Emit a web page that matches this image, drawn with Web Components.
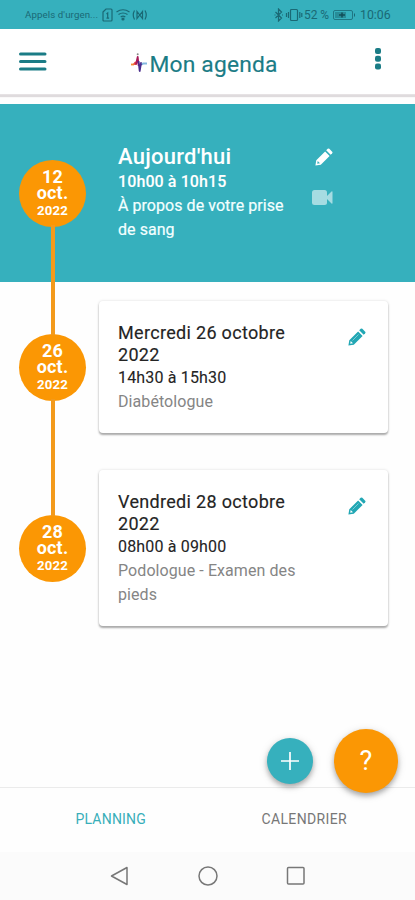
<!DOCTYPE html>
<html lang="fr"><head><meta charset="utf-8"><title>Mon agenda</title>
<style>html,body{margin:0;background:#fefefe;font-family:Roboto,"Liberation Sans",sans-serif;overflow:hidden}</style></head><body>
<agenda-app></agenda-app>
<script>
const define=(name,html)=>{
  const t=document.createElement('template');t.innerHTML=html;
  customElements.define(name,class extends HTMLElement{
    constructor(){super();this.attachShadow({mode:'open'}).append(t.content.cloneNode(true));}
  });
};
define('status-bar',`<style>
:host{display:flex;height:29px;box-sizing:border-box;padding:1px 23px 0 25px;background:#36b0bd;color:#1a6975;align-items:center;justify-content:space-between}
div{display:flex;align-items:center}svg{display:block;fill:none;stroke:currentColor}
.c{font-size:9.7px;letter-spacing:.1px;line-height:14px;width:76px;white-space:nowrap}
.p{font-size:12px;line-height:14px;width:28px;white-space:nowrap;letter-spacing:-.1px}.t{font-size:12.3px;line-height:14px;margin-left:4px;width:32px;white-space:nowrap}
</style><div><span class="c">Appels d'urgen...</span>
<svg width="46" height="14" viewBox="0 0 46 14" stroke-width="1.2"><path d="M2 4l3-3h5q1 0 1 1v10q0 1-1 1H3q-1 0-1-1zM5.500 6l1.200-1v5M5.500 10.200h2.600M15.500 4q6.500-4.500 13 0M17.500 6.500q4.500-3 9 0M19.700 9q2.300-1.600 4.600 0"/><circle cx="22" cy="11" r="1" fill="currentColor"/><path d="M33.500 2.500q-2.500 4.500 0 9M44 2.500q2.500 4.500 0 9M36 3.500v7l5.500-7v7zM36 3.500l5.500 7"/></svg></div>
<div><svg width="31" height="14" viewBox="0 0 31 14" stroke-width="1.2"><path d="M2.500 4l6 6-3 3V1l3 3-6 6M1.500 7h1M9 7h1"/><rect x="17.500" y="1.500" width="7" height="11" rx="1"/><path d="M15.500 4v6M13.500 5v4M26.800 4v6M28.800 5v4"/></svg>
<span class="p">52 %</span><svg width="24" height="12" viewBox="0 0 24 12"><rect x="1.500" y="1.500" width="19" height="9" rx="1.500" opacity=".8"/><rect x="3" y="3" width="11" height="6" fill="currentColor" stroke="none" opacity=".5"/><path d="M7 6h6M10 3.500v5" stroke="#124e58" stroke-width="1.500"/><path d="M22.500 4.500v3"/></svg><span class="t">10:06</span></div>`);
define('app-header',`<style>
:host{display:flex;height:65px;box-sizing:border-box;padding:0 33px 0 19px;background:#fff;color:#1b7c86;align-items:center;justify-content:space-between;box-shadow:0 1px 0 #e6e2e4,0 3px 1px #dfdbdd;margin-bottom:10px}
.m{margin-top:1px}svg{display:block}.brand{display:flex;align-items:center;padding:7px 13px 0 0}h1{font:400 22.8px/30px Roboto,sans-serif;letter-spacing:.18px;margin:0 0 0 3px;width:128px;white-space:nowrap;-webkit-text-stroke:.15px}
.k{margin-top:-5px}
</style><svg class="m" width="28" height="20" viewBox="0 0 28 20" stroke="currentColor" stroke-width="3" stroke-linecap="round"><path d="M1.500 2h24.500M1.500 9.500h24.500M1.500 17h24.500"/></svg>
<div class="brand"><svg width="16" height="20" viewBox="0 0 16 20" fill="none" stroke-width="1.800" stroke-linejoin="round" style="margin-top:-4px"><path d="M0 11.500h3" stroke="#f28a2d"/><path d="M2.800 11.500l1.500-2 1.200 2" stroke="#e84a43"/><path d="M5 11.500l1.700-7.500 1 9" stroke="#a81958"/><path d="M7.500 8l1.200 10 1.300-8 1.200 2" stroke="#4a2d8c"/><path d="M11 11.500l1-1h4" stroke="#83b9df"/><circle cx="6.700" cy="1.300" r="1" fill="#888"/></svg><h1>Mon agenda</h1></div>
<svg class="k" width="8" height="24" viewBox="0 0 8 24" fill="currentColor"><rect x="1" y="1" width="6" height="6" rx="2"/><rect x="1" y="8.800" width="6" height="6" rx="2"/><rect x="1" y="16.600" width="6" height="6" rx="2"/></svg>`);
define('date-badge',`<style>
:host{display:flex;flex-direction:column;align-items:center;justify-content:center;width:67px;height:67px;border-radius:50%;background:#fb9704;color:#fff;font-weight:700;font-size:18px;line-height:16px;letter-spacing:.2px;box-sizing:border-box;text-align:center;padding-top:1px}
.y{font-size:13.2px;line-height:17px;letter-spacing:.2px;padding-top:1px}
</style><slot name="day"></slot><span class="y"><slot></slot></span>`);
define('edit-icon',`<style>:host{display:block;width:18px;height:18px}svg{display:block}</style>
<svg width="18" height="18" viewBox="0 0 18 18" fill="currentColor"><path fill-rule="evenodd" d="M.400 17.600l.900-5.400L10.100 3.400l4.500 4.500-8.800 8.800zM2.700 13l-.500 2.800 2.800-.500z"/><path d="M11.200 2.300l1.500-1.500q.8-.8 1.600 0l2.900 2.900q.8.800 0 1.600l-1.500 1.500z"/><path d="M4.500 12.500l6-6" stroke="#fff" stroke-width=".7" opacity=".6"/></svg>`);
define('video-icon',`<style>:host{display:block;width:21px;height:16px}svg{display:block}</style>
<svg width="21" height="16" viewBox="0 0 21 16" fill="#a6dce2"><rect width="15" height="15" rx="2.500"/><path d="M15 6l4.500-4.500q1-.7 1 .5v11q0 1.200-1 .5L15 9z"/></svg>`);
define('agenda-row',`<style>
:host{display:grid;grid-template-columns:67px 1fr;column-gap:13px;align-items:center;padding:0 27px 0 19px}
article{display:grid;grid-template-columns:184px 1fr;box-sizing:border-box;padding:21px 22px 19px 19px;background:#fff;border-radius:4px;color:#242424;box-shadow:0 2px 2px #aaa,0 0 3px #ddd}
h2{font:400 18px/22px Roboto,sans-serif;margin:0;letter-spacing:.32px;-webkit-text-stroke:.15px}
.time{font-size:16px;line-height:24px;letter-spacing:.17px;-webkit-text-stroke:.1px}p{margin:0;font-size:16px;line-height:24px;color:#858585;letter-spacing:.08px}
aside{display:flex;flex-direction:column;align-items:flex-end;color:#22a7b4;padding-top:6px}
:host([today]){height:178px;background:#36b0bd}
:host([today]) article{background:none;box-shadow:none;color:#fff;padding:0 55px 0 19px}
:host([today]) h2{font-size:22px;line-height:26px;font-weight:500;letter-spacing:.25px;-webkit-text-stroke:0}
:host([today]) .time{font-weight:500;letter-spacing:.1px}:host([today]) p{color:#f3ffff;letter-spacing:.05px;-webkit-text-stroke:.2px}
:host([today]) aside{color:#fff;gap:24px;padding-top:4px}
</style><slot name="badge"></slot><article><div><h2><slot name="title"></slot></h2><div class="time"><slot name="time"></slot></div><p><slot></slot></p></div><aside><slot name="actions"></slot></aside></article>`);
define('time-line',`<style>
:host{display:flex;flex-direction:column;position:relative}
::slotted(agenda-row:nth-child(2)){margin-top:19px}::slotted(agenda-row:nth-child(3)){margin-top:37px}
</style><slot></slot>`);
define('line-segment',`<style>:host{position:absolute;left:51px;top:var(--top);height:var(--h);width:4px;background:#f39a1b}</style>`);
define('round-button',`<style>:host{display:flex;align-items:center;justify-content:center;width:var(--s);height:var(--s);border-radius:50%;background:var(--bg);color:#fff;font-size:27px;line-height:1;box-shadow:0 3px 5px #0004,0 2px 10px #0002}</style><slot></slot>`);
define('tab-bar',`<style>
:host{display:grid;grid-template-columns:1fr 1fr;height:65px;border-top:1px solid #ebebeb;box-sizing:border-box;padding:0 14px;text-align:center;font-size:14px;line-height:63px;color:#777;background:#fefefe}
.on{color:#38aeb9;letter-spacing:.2px}span{letter-spacing:.35px}
</style><span class="on">PLANNING</span><span>CALENDRIER</span>`);
define('nav-bar',`<style>:host{display:flex;height:48px;justify-content:center;align-items:center;background:#fbfbfb}svg{display:block}</style>
<svg width="200" height="22" viewBox="0 0 200 22" fill="none" stroke="#777" stroke-width="1.500" stroke-linejoin="round"><path d="M19 2.500v17L3.500 11z"/><circle cx="100" cy="11" r="9"/><rect x="179.500" y="2.500" width="16.500" height="16.500" rx="1"/></svg>`);
define('agenda-app',`<style>
:host{display:flex;flex-direction:column;width:415px;height:900px;background:#fefefe;position:relative}
time-line{flex:1}
.fabs{position:absolute;right:17px;bottom:107px;display:flex;align-items:center;gap:21px}
svg{display:block}
</style><status-bar></status-bar><app-header></app-header>
<time-line>
<agenda-row today><date-badge slot="badge"><span slot="day">12<br>oct.</span>2022</date-badge><span slot="title">Aujourd'hui</span><span slot="time">10h00 à 10h15</span>À propos de votre prise de sang<edit-icon slot="actions"></edit-icon><video-icon slot="actions"></video-icon></agenda-row>
<agenda-row><date-badge slot="badge"><span slot="day">26<br>oct.</span>2022</date-badge><span slot="title">Mercredi 26 octobre 2022</span><span slot="time">14h30 à 15h30</span>Diabétologue<edit-icon slot="actions"></edit-icon></agenda-row>
<agenda-row><date-badge slot="badge"><span slot="day">28<br>oct.</span>2022</date-badge><span slot="title">Vendredi 28 octobre 2022</span><span slot="time">08h00 à 09h00</span>Podologue - Examen des pieds<edit-icon slot="actions"></edit-icon></agenda-row>
<line-segment style="--top:121px;--h:110px"></line-segment><line-segment style="--top:295px;--h:117px"></line-segment>
</time-line>
<tab-bar></tab-bar><nav-bar></nav-bar>
<div class="fabs"><round-button style="--s:46px;--bg:#36b0bd"><svg width="18" height="18" viewBox="0 0 18 18" stroke="#fff" stroke-width="1.700"><path d="M0 9h18M9 0v18"/></svg></round-button><round-button style="--s:64px;--bg:#fb9704">?</round-button></div>`);
</script></body></html>
